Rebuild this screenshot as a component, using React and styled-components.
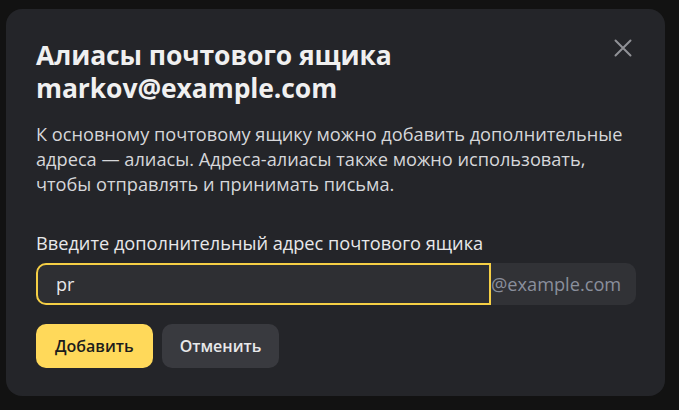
import React, { useState } from "react";
import styled, { createGlobalStyle } from "styled-components";

const GlobalStyle = createGlobalStyle`
  html, body {
    margin: 0;
    padding: 0;
    background: #121212;
    height: 100%;
  }
  body {
    font-family: "Open Sans", "Noto Sans", Arial, sans-serif;
    -webkit-font-smoothing: antialiased;
  }
  #root {
    height: 100%;
  }
`;

const Page = styled.div`
  width: 679px;
  height: 410px;
  padding: 9px 14px 14px 6px;
  box-sizing: border-box;
  background: #121212;
  overflow: hidden;
`;

const Modal = styled.div`
  position: relative;
  height: 387px;
  background: #242529;
  border-radius: 16px;
  padding: 30px 30px 0 30px;
  box-sizing: border-box;
  display: flex;
  flex-direction: column;
`;

const Title = styled.h1`
  margin: 0;
  font-size: 26.5px;
  line-height: 33px;
  font-weight: 700;
  letter-spacing: -0.1px;
  color: #f0f0f0;
  padding-right: 60px;
`;

const CloseButton = styled.button`
  position: absolute;
  top: 27px;
  right: 30px;
  width: 24px;
  height: 24px;
  padding: 0;
  border: none;
  background: transparent;
  cursor: pointer;
  display: flex;
  align-items: center;
  justify-content: center;
`;

const Text = styled.p`
  margin: 17px 0 0 0;
  font-size: 18.2px;
  line-height: 25px;
  color: #d6d7da;
`;

const Label = styled.label`
  display: block;
  margin-top: 34px;
  font-size: 18.2px;
  line-height: 24px;
  color: #e8e8ea;
`;

const Field = styled.div`
  display: flex;
  margin-top: 8px;
  width: 600px;
  height: 42px;
  background: #313236;
  border-radius: 10px;
`;

const Input = styled.input`
  width: 455px;
  height: 100%;
  box-sizing: border-box;
  background: #2e2f33;
  border: 2px solid #f5cf45;
  border-radius: 10px 0 0 10px;
  padding: 0 18px;
  font-family: inherit;
  font-size: 18px;
  color: #e8e8ea;
  outline: none;
`;

const Suffix = styled.span`
  display: flex;
  align-items: center;
  font-size: 18.2px;
  color: #8a8f9c;
`;

const Actions = styled.div`
  display: flex;
  gap: 9px;
  margin-top: 19px;
`;

const Button = styled.button`
  height: 44px;
  padding: 0 ${(p) => (p.primary ? "19px" : "18px")};
  border: none;
  border-radius: 10px;
  font-family: inherit;
  font-size: 16px;
  font-weight: 600;
  cursor: pointer;
  background: ${(p) => (p.primary ? "#ffd95a" : "#393a3f")};
  color: ${(p) => (p.primary ? "#1c1c1c" : "#e8e8ea")};
`;

const App = () => {
  const [alias, setAlias] = useState("pr");

  return (
    <Page>
      <GlobalStyle />
      <Modal>
        <Title>
          Алиасы почтового ящика
          <br />
          markov@example.com
        </Title>
        <CloseButton aria-label="Закрыть">
          <svg width="18" height="18" viewBox="0 0 18 18">
            <path
              d="M1.5 1.5 L16.5 16.5 M16.5 1.5 L1.5 16.5"
              stroke="#909196"
              strokeWidth="2"
              strokeLinecap="round"
            />
          </svg>
        </CloseButton>
        <Text>
          К основному почтовому ящику можно добавить дополнительные адреса —
          алиасы. Адреса-алиасы также можно использовать, чтобы отправлять и
          принимать письма.
        </Text>
        <Label htmlFor="alias">Введите дополнительный адрес почтового ящика</Label>
        <Field>
          <Input id="alias" value={alias} onChange={(e) => setAlias(e.target.value)} />
          <Suffix>@example.com</Suffix>
        </Field>
        <Actions>
          <Button primary>Добавить</Button>
          <Button>Отменить</Button>
        </Actions>
      </Modal>
    </Page>
  );
};

export default App;
